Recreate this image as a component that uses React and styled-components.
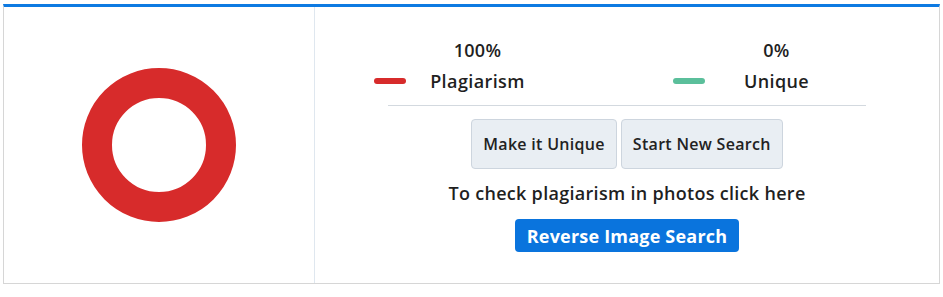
import React from "react";
import styled, { createGlobalStyle } from "styled-components";

const GlobalStyle = createGlobalStyle`
  body {
    margin: 0;
    background: #fff;
    font-family: "Open Sans", "Noto Sans", sans-serif;
    color: #1f1f1f;
  }
`;

const Page = styled.div`
  padding: 4px 3px;
`;

const Card = styled.div`
  display: flex;
  height: 276px;
  border: 1px solid #d6d6d6;
  border-top: 3px solid #0d7ae2;
  background: #fff;
`;

const ChartCol = styled.div`
  width: 310px;
  display: flex;
  align-items: center;
  justify-content: center;
  border-right: 1px solid #dfe7ef;
  padding-bottom: 1px;
`;

const ResultCol = styled.div`
  flex: 1;
  display: flex;
  flex-direction: column;
  align-items: center;
  padding-top: 27px;
`;

const Legend = styled.div`
  display: flex;
  gap: 124px;
  padding-right: 32px;
`;

const LegendItem = styled.div`
  display: grid;
  grid-template-columns: 32px 143px;
  grid-template-rows: 31px 31px;
  align-items: center;
`;

const Percent = styled.div`
  grid-column: 2;
  text-align: center;
  font-size: 18px;
  font-weight: 600;
  letter-spacing: 0.3px;
`;

const Swatch = styled.span`
  grid-column: 1;
  height: 6px;
  border-radius: 3px;
  background: ${(p) => p.color};
`;

const Label = styled.div`
  text-align: center;
  font-size: 18px;
  font-weight: 600;
  letter-spacing: 0.4px;
`;

const Rule = styled.hr`
  width: 478px;
  border: 0;
  border-top: 1px solid #d3d9df;
  margin: 9px 0 13px;
`;

const Actions = styled.div`
  display: flex;
  gap: 4px;
`;

const GhostButton = styled.button`
  height: 50px;
  padding: 0 11px;
  font-family: inherit;
  font-size: 16px;
  font-weight: 600;
  letter-spacing: 0.3px;
  color: #222;
  background: #e9eef3;
  border: 1px solid #cdd5de;
  border-radius: 4px;
`;

const Hint = styled.p`
  margin: 13px 0 0;
  font-size: 18px;
  line-height: 23px;
  font-weight: 600;
  letter-spacing: 0.3px;
`;

const PrimaryButton = styled.button`
  margin-top: 14px;
  height: 33px;
  padding: 0 12px;
  font-family: inherit;
  font-size: 18px;
  font-weight: 700;
  letter-spacing: 0.2px;
  color: #fff;
  background: #0a74dd;
  border: 0;
  border-radius: 4px;
`;

function Donut() {
  return (
    <svg width="154" height="154" viewBox="0 0 154 154">
      <circle cx="77" cy="77" r="62" fill="none" stroke="#d72b2b" strokeWidth="30" />
    </svg>
  );
}

export default function App() {
  return (
    <Page>
      <GlobalStyle />
      <Card>
        <ChartCol>
          <Donut />
        </ChartCol>
        <ResultCol>
          <Legend>
            <LegendItem>
              <Percent>100%</Percent>
              <Swatch color="#d72b2b" />
              <Label>Plagiarism</Label>
            </LegendItem>
            <LegendItem>
              <Percent>0%</Percent>
              <Swatch color="#5bbf9b" />
              <Label>Unique</Label>
            </LegendItem>
          </Legend>
          <Rule />
          <Actions>
            <GhostButton>Make it Unique</GhostButton>
            <GhostButton>Start New Search</GhostButton>
          </Actions>
          <Hint>To check plagiarism in photos click here</Hint>
          <PrimaryButton>Reverse Image Search</PrimaryButton>
        </ResultCol>
      </Card>
    </Page>
  );
}
